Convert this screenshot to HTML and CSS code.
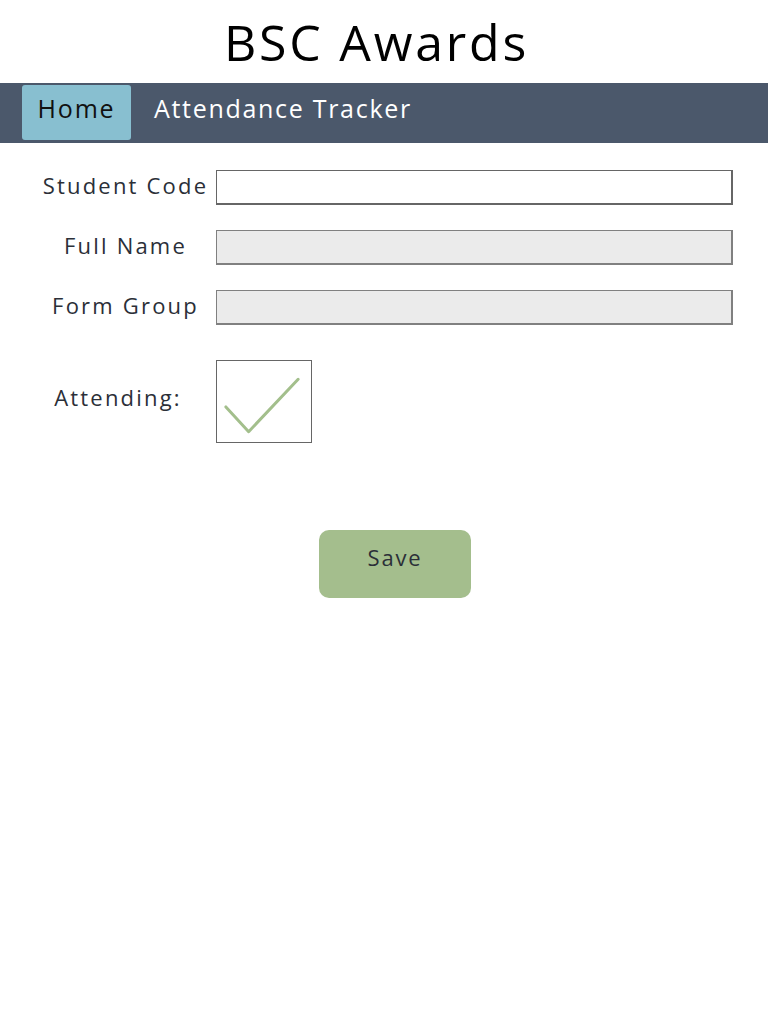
FILE: index.html
```html
<!DOCTYPE html>
<html>
<head>
<meta charset="utf-8">
<link rel="stylesheet" href="styles.css">
</head>
<body>
<header class="title-bar"><h1 class="title">BSC Awards</h1></header>
<nav class="nav">
  <a class="nav-item active">Home</a>
  <a class="nav-item">Attendance Tracker</a>
</nav>
<main class="form">
  <div class="row">
    <label class="label">Student Code</label>
    <div class="field"></div>
  </div>
  <div class="row">
    <label class="label">Full Name</label>
    <div class="field disabled"></div>
  </div>
  <div class="row">
    <label class="label">Form Group</label>
    <div class="field disabled"></div>
  </div>
  <div class="row check-row">
    <label class="label attending">Attending:</label>
    <div class="checkbox">
      <svg width="95" height="82" viewBox="0 0 95 82"><polyline points="9,46 32,71 82,18" fill="none" stroke="#a3bf8c" stroke-width="3" stroke-linecap="round" stroke-linejoin="round"/></svg>
    </div>
  </div>
  <div class="actions">
    <button class="save">Save</button>
  </div>
</main>
</body>
</html>
```
FILE: styles.css
```css
html, body { margin: 0; padding: 0; background: #fff; }
body { font-family: "Open Sans", "Liberation Sans", sans-serif; color: #2b2f38; width: 768px; }
.title-bar { height: 83px; display: flex; align-items: center; justify-content: center; }
.title { margin: 0; font-weight: 400; font-size: 50px; line-height: 1; color: #000; letter-spacing: 2.8px; padding-right: 15px; }
.nav { height: 60px; background: #4b586b; display: flex; align-items: flex-start; padding-left: 22px; box-sizing: border-box; padding-top: 2px; }
.nav-item { height: 55px; box-sizing: border-box; display: flex; align-items: flex-start; padding-top: 6px; font-size: 25px; color: #fff; letter-spacing: 1.7px; }
.nav-item.active { background: #88bfd0; color: #111; border-radius: 3px; width: 109px; justify-content: center; margin-right: 23px; letter-spacing: 1.8px; }
.form { padding-top: 27px; }
.row { display: flex; align-items: center; height: 35px; margin-bottom: 25px; }
.label { width: 167px; margin-left: 42px; margin-right: 7px; text-align: center; font-size: 22px; letter-spacing: 2.2px; color: #2b2f38; padding-bottom: 6px; }
.field { width: 517px; height: 35px; box-sizing: border-box; border: 1px solid #666; border-right-width: 2px; border-bottom-width: 2px; background: #fff; }
.field.disabled { background: #ebebeb; border-color: #808080; }
.check-row { height: 82px; margin-top: 35px; margin-bottom: 0; }
.attending { padding-right: 15px; width: 152px; padding-bottom: 8px; }
.checkbox { width: 96px; height: 83px; box-sizing: border-box; border: 1px solid #666; display: flex; }
.checkbox svg { display: block; }
.actions { display: flex; justify-content: center; padding-left: 22px; margin-top: 88px; }
.save { width: 152px; height: 68px; border: none; border-radius: 10px; background: #a4be8d; font-family: inherit; font-size: 22px; color: #2b2f38; display: flex; align-items: flex-start; justify-content: center; padding-top: 12px; letter-spacing: 1.8px; }
```
